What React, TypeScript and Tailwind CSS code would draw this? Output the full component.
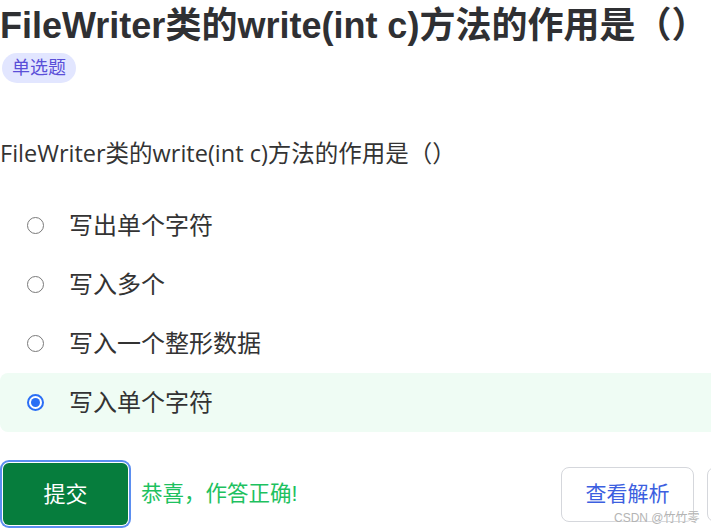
import { useState } from "react";

const options = ["写出单个字符", "写入多个", "写入一个整形数据", "写入单个字符"];

export default function App() {
  const [selected, setSelected] = useState(3);

  return (
    <div
      className="relative w-[711px] h-[530px] overflow-hidden bg-white"
      style={{ fontFamily: '"Liberation Sans", "Noto Sans CJK SC", sans-serif' }}
    >
      <div className="w-[840px]">
        {/* Title */}
        <h1 className="mt-[4px] text-[36px] leading-[44px] font-bold text-[#2f3033] whitespace-nowrap">
          FileWriter类的write(int c)方法的作用是（）
        </h1>
        <span className="ml-[2px] mt-[5px] inline-flex h-[30px] items-center rounded-full bg-[#e2e6ff] px-[10px] text-[18px] text-[#5a4fd8]">
          单选题
        </span>

        {/* Question */}
        <p
          className="mt-[54px] text-[23.5px] leading-[32px] text-[#333]"
          style={{ fontFamily: '"Open Sans", "Noto Sans CJK SC", sans-serif' }}
        >
          FileWriter类的write(int c)方法的作用是（）
        </p>

        {/* Options */}
        <div className="mt-[27px]">
          {options.map((opt, i) => {
            const active = selected === i;
            return (
              <div
                key={i}
                onClick={() => setSelected(i)}
                className={`flex h-[59px] cursor-pointer items-center rounded-l-lg pl-[27px] ${
                  active ? "bg-[#effcf4]" : ""
                }`}
              >
                {active ? (
                  <span className="flex h-[17px] w-[17px] items-center justify-center rounded-full border-2 border-[#2b6ff5] bg-white">
                    <span className="h-[9px] w-[9px] rounded-full bg-[#2b6ff5]" />
                  </span>
                ) : (
                  <span className="h-[17px] w-[17px] rounded-full border-[1.5px] border-[#7a7a7a] bg-white" />
                )}
                <span className="ml-[25px] text-[24px] text-[#333]">{opt}</span>
              </div>
            );
          })}
        </div>

        {/* Actions */}
        <div className="mt-[31px] flex items-center">
          <button className="ml-[3px] h-[62px] w-[125px] rounded-md bg-[#067d3d] text-[22px] text-white ring-2 ring-[#5b8ef0] ring-offset-1">
            提交
          </button>
          <span className="ml-[13px] text-[21.5px] text-[#1ec15f]">恭喜，作答正确!</span>
          <button className="ml-auto h-[55px] w-[133px] rounded-lg border border-[#d5d7dc] bg-white text-[21px] text-[#3c5fe0]">
            查看解析
          </button>
          <button className="ml-[13px] h-[55px] w-[133px] rounded-lg border border-[#d5d7dc] bg-white" />
        </div>
      </div>

      {/* Watermark */}
      <span className="absolute left-[614px] top-[509px] text-[12px] text-[#b4b4b4] [text-shadow:0_0_2px_white]">
        CSDN @竹竹零
      </span>
    </div>
  );
}
